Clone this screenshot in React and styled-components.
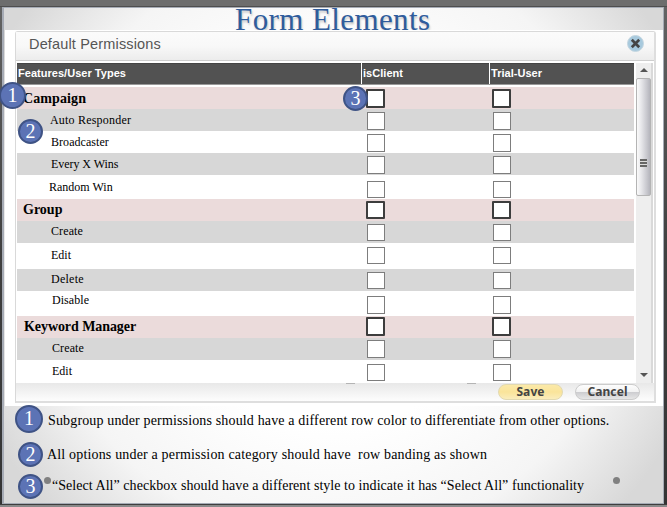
import React from "react";
import styled, { createGlobalStyle } from "styled-components";

const GlobalStyle = createGlobalStyle`
  * { box-sizing: border-box; }
  body { margin: 0; overflow: hidden; }
`;

const serif = `"Palatino Linotype", "Book Antiqua", "Liberation Serif", serif`;
const sans = `"Liberation Sans", Arial, sans-serif`;

const Desk = styled.div`
  width: 667px;
  height: 507px;
  padding: 7px 3px 3px 2px;
  background:
    linear-gradient(#4e4e4e, #4e4e4e) 0 6px / 100% 1px no-repeat,
    linear-gradient(#6d6d6d, #6d6d6d) 0 0 / 100% 6px no-repeat,
    linear-gradient(#3e3e3e 0 1px, #8a8a8a 1px) 0 100% / 100% 3px no-repeat,
    linear-gradient(#646464, #404040 50%, #343434);
`;

const Slide = styled.main`
  position: relative;
  display: flex;
  flex-direction: column;
  width: 662px;
  height: 497px;
  border: 1px solid #a6abb5;
  border-left-width: 2px;
  background: radial-gradient(circle 400px at 50% 48%, #fff 45%, #f5f5f5 74%, #d8d8d8 97%);
`;

const Title = styled.h1`
  height: 22px;
  margin: 0;
  padding-left: 231px;
  font: 400 31px/23px ${serif};
  letter-spacing: 0.4px;
  white-space: nowrap;
  color: #2f5c9c;
  text-shadow: 1px 2px 2px #0003;
`;

const Sheet = styled.div`
  height: 376px;
  margin-left: 1px;
  padding: 1px 8px 0 10px;
  background: #fff;
`;

const Dialog = styled.section`
  display: flex;
  flex-direction: column;
  width: 641px;
  height: 372px;
  border: 1px solid #d9d9d9;
  border-right: 2px solid #dedede;
  border-bottom: 2px solid #dedede;
  border-radius: 3px 3px 0 0;
`;

const DialogHeader = styled.header`
  display: flex;
  justify-content: space-between;
  height: 29px;
  padding: 0 10px 0 13px;
  border-bottom: 1px solid #cecece;
  background: linear-gradient(#fbfbfb, #f8f8f8 50%, #ececec);
`;

const DialogTitle = styled.h2`
  margin: 0;
  font: 400 14.5px/24px ${sans};
  letter-spacing: 0.16px;
  color: #555;
`;

const CloseButton = styled.button`
  width: 17px;
  height: 17px;
  margin-top: 3px;
  padding: 0;
  border: 0;
  background: none;
  svg { display: block; }
`;

const DialogBody = styled.div`
  display: flex;
  height: 322px;
  padding: 2px 0 0 1px;
  background: #fff;
`;

const Table = styled.div`
  width: 617px;
`;

const HeadRow = styled.div`
  display: grid;
  grid-template-columns: 344px 127px 144px;
  column-gap: 1px;
  height: 22px;
  margin-bottom: 2px;
  border-bottom: 1px solid #999;
`;

const HeadCell = styled.div`
  padding-left: 1px;
  background: #525252;
  border-top: 1px solid #444;
  font: 700 11px/19px ${sans};
  letter-spacing: 0.03px;
  color: #fff;
`;

const bands = { group: "#ebdbdb", gray: "#d7d7d7", white: "#fff" };

const Row = styled.div`
  display: grid;
  grid-template-columns: 349px 126px 1fr;
  height: ${(p) => p.$height}px;
  background: ${(p) => bands[p.$band]};
`;

const RowLabel = styled.div`
  padding: ${(p) => p.$top}px 0 0 ${(p) => p.$left}px;
  font: ${(p) => (p.$strong ? "700 14px/16px" : "400 12px/16px")} ${serif};
  letter-spacing: ${(p) => p.$spacing}px;
  white-space: nowrap;
  color: #000;
`;

const Checkbox = styled.button.attrs({ type: "button", role: "checkbox", "aria-checked": false })`
  display: block;
  width: ${(p) => (p.$strong ? 19 : 18)}px;
  height: ${(p) => p.$size}px;
  margin: ${(p) => p.$top}px 0 0 ${(p) => (p.$strong ? 0 : 1)}px;
  padding: 0;
  border: ${(p) => (p.$strong ? "2px solid #3d3d3d" : "1px solid #7d7d7d")};
  border-radius: ${(p) => (p.$strong ? 1 : 0)}px;
  background: #fff;
`;

const Scrollbar = styled.div`
  display: flex;
  flex-direction: column;
  align-items: center;
  width: 17px;
  height: 320px;
  margin-left: 2px;
  border-right: 2px solid #d9d9d9;
  background: #eee;
`;

const Arrow = styled.div`
  width: 0;
  height: 0;
  margin-top: ${(p) => (p.$down ? "auto" : "5px")};
  margin-bottom: 6px;
  border: 4px solid transparent;
  ${(p) => (p.$down ? "border-top-color: #555; border-bottom: 0;" : "border-bottom-color: #555; border-top: 0;")}
`;

const Thumb = styled.div`
  display: flex;
  align-items: center;
  justify-content: center;
  width: 15px;
  height: 118px;
  border: 1px solid #b4b4b4;
  border-radius: 2px;
  background: linear-gradient(90deg, #fafafa, #e9e9ec 30%, #c8c8ce 75%, #b5b5bc);
`;

const Grip = styled.div`
  width: 7px;
  height: 8px;
  margin-top: 52px;
  background: repeating-linear-gradient(#666 0 2px, #ddd 2px 3px);
`;

const DialogFooter = styled.footer`
  display: flex;
  gap: 12px;
  justify-content: flex-end;
  height: 18px;
  padding-right: 14px;
  background:
    linear-gradient(#b4b4b4, #b4b4b4) 330px 0 / 9px 1px no-repeat,
    linear-gradient(#b4b4b4, #b4b4b4) 451px 0 / 9px 1px no-repeat,
    linear-gradient(#e8e8e8, #fdfdfd);
`;

const PillButton = styled.button`
  width: 65px;
  height: 16px;
  margin-top: 1px;
  padding: 0;
  border: 1px solid ${(p) => (p.$primary ? "#e2d9b0" : "#ccc")};
  border-radius: 8px;
  background: ${(p) =>
    p.$primary
      ? "linear-gradient(#fbe9a8, #fae49a 50%, #faedbc)"
      : "linear-gradient(#fdfdfd 0, #f2f2f2 48%, #cdcdd0 52%, #e6e6e6)"};
  font: 700 12px/12px "Noto Sans", sans-serif;
  letter-spacing: ${(p) => (p.$primary ? 0.1 : 0.1)}px;
  color: #444;
`;

const Badge = styled.span`
  display: flex;
  align-items: center;
  justify-content: center;
  flex: none;
  width: ${(p) => p.$size}px;
  height: ${(p) => p.$size}px;
  padding-bottom: 2px;
  border: 2px solid #3f5385;
  border-radius: 50%;
  background: #5c73b5;
  font: 400 20px/20px ${serif};
  color: #fff;
`;

const Callout = styled(Badge)`
  position: absolute;
  left: ${(p) => p.$x}px;
  top: ${(p) => p.$y}px;
`;

const Notes = styled.ol`
  display: flex;
  flex-direction: column;
  margin: -1px 0 0;
  padding: 0;
  list-style: none;
`;

const Note = styled.li`
  display: flex;
  align-items: flex-start;
  height: ${(p) => p.$height}px;
  padding-left: ${(p) => p.$left}px;
`;

const NoteText = styled.span`
  margin: ${(p) => p.$top}px 0 0 ${(p) => p.$left}px;
  font: 400 14px/18px ${serif};
  letter-spacing: ${(p) => p.$spacing}px;
  white-space: pre;
  color: #000;
`;

const Dot = styled.i`
  position: absolute;
  left: ${(p) => p.$x}px;
  top: 469px;
  width: 7px;
  height: 7px;
  border-radius: 50%;
  background: #808080;
`;

const rows = [
  { label: "Campaign", band: "group", height: 22, left: 6, top: 4, box: 2, size: 19, spacing: 0.1 },
  { label: "Auto Responder", band: "gray", height: 22, left: 33, top: 3, box: 3, size: 18, spacing: 0.2 },
  { label: "Broadcaster", band: "white", height: 22, left: 34, top: 3, box: 3, size: 18, spacing: 0.05 },
  { label: "Every X Wins", band: "gray", height: 22, left: 34, top: 3, box: 3, size: 18, spacing: -0.05 },
  { label: "Random  Win", band: "white", height: 24, left: 32, top: 4, box: 6, size: 17, spacing: 0 },
  { label: "Group", band: "group", height: 22, left: 6, top: 3, box: 2, size: 18, spacing: 0 },
  { label: "Create", band: "gray", height: 22, left: 34, top: 2, box: 3, size: 17, spacing: 0.1 },
  { label: "Edit", band: "white", height: 26, left: 34, top: 4, box: 4, size: 17, spacing: 0 },
  { label: "Delete", band: "gray", height: 22, left: 34, top: 2, box: 3, size: 17, spacing: 0.25 },
  { label: "Disable", band: "white", height: 25, left: 35, top: 1, box: 5, size: 18, spacing: 0.05 },
  { label: "Keyword Manager", band: "group", height: 22, left: 7, top: 3, box: 1, size: 19, spacing: -0.07 },
  { label: "Create", band: "gray", height: 22, left: 35, top: 2, box: 2, size: 18, spacing: 0.1 },
  { label: "Edit", band: "white", height: 23, left: 35, top: 3, box: 4, size: 17, spacing: 0 },
];

function PermissionRow({ row }) {
  const strong = row.band === "group";
  return (
    <Row $height={row.height} $band={row.band}>
      <RowLabel $strong={strong} $top={row.top} $left={row.left} $spacing={row.spacing}>
        {row.label}
      </RowLabel>
      <Checkbox $strong={strong} $top={row.box} $size={row.size} />
      <Checkbox $strong={strong} $top={row.box} $size={row.size} />
    </Row>
  );
}

export default function App() {
  return (
    <>
      <GlobalStyle />
      <Desk>
        <Slide>
          <Title>Form Elements</Title>
          <Sheet>
            <Dialog>
              <DialogHeader>
                <DialogTitle>Default Permissions</DialogTitle>
                <CloseButton aria-label="Close">
                  <svg width="17" height="17" viewBox="0 0 17 17">
                    <circle cx="8.5" cy="8.5" r="8" fill="#a7c9dd" stroke="#c4d6e0" />
                    <path d="M4.8 4.8l7.4 7.4M12.2 4.8l-7.4 7.4" stroke="#444" strokeWidth="2.7" />
                  </svg>
                </CloseButton>
              </DialogHeader>
              <DialogBody>
                <Table>
                  <HeadRow>
                    <HeadCell>Features/User Types</HeadCell>
                    <HeadCell>isClient</HeadCell>
                    <HeadCell>Trial-User</HeadCell>
                  </HeadRow>
                  {rows.map((row, i) => (
                    <PermissionRow key={i} row={row} />
                  ))}
                </Table>
                <Scrollbar>
                  <Arrow />
                  <Thumb>
                    <Grip />
                  </Thumb>
                  <Arrow $down />
                </Scrollbar>
              </DialogBody>
              <DialogFooter>
                <PillButton $primary>Save</PillButton>
                <PillButton>Cancel</PillButton>
              </DialogFooter>
            </Dialog>
          </Sheet>
          <Notes>
            <Note $height={37} $left={11}>
              <Badge $size={28}>1</Badge>
              <NoteText $top={7} $left={5} $spacing={0.15}>
                Subgroup under permissions should have a different row color to differentiate from other options.
              </NoteText>
            </Note>
            <Note $height={32} $left={14}>
              <Badge $size={25}>2</Badge>
              <NoteText $top={4} $left={4} $spacing={0.17}>
                {"All options under a permission category should have  row banding as shown"}
              </NoteText>
            </Note>
            <Note $height={28} $left={14}>
              <Badge $size={25}>3</Badge>
              <NoteText $top={3} $left={9} $spacing={0.045}>
                “Select All” checkbox should have a different style to indicate it has “Select All” functionality
              </NoteText>
            </Note>
          </Notes>
          <Callout $size={27} $x={-5} $y={74}>1</Callout>
          <Callout $size={25} $x={14} $y={111}>2</Callout>
          <Callout $size={25} $x={339} $y={78}>3</Callout>
          <Dot $x={40} />
          <Dot $x={609} />
        </Slide>
      </Desk>
    </>
  );
}
